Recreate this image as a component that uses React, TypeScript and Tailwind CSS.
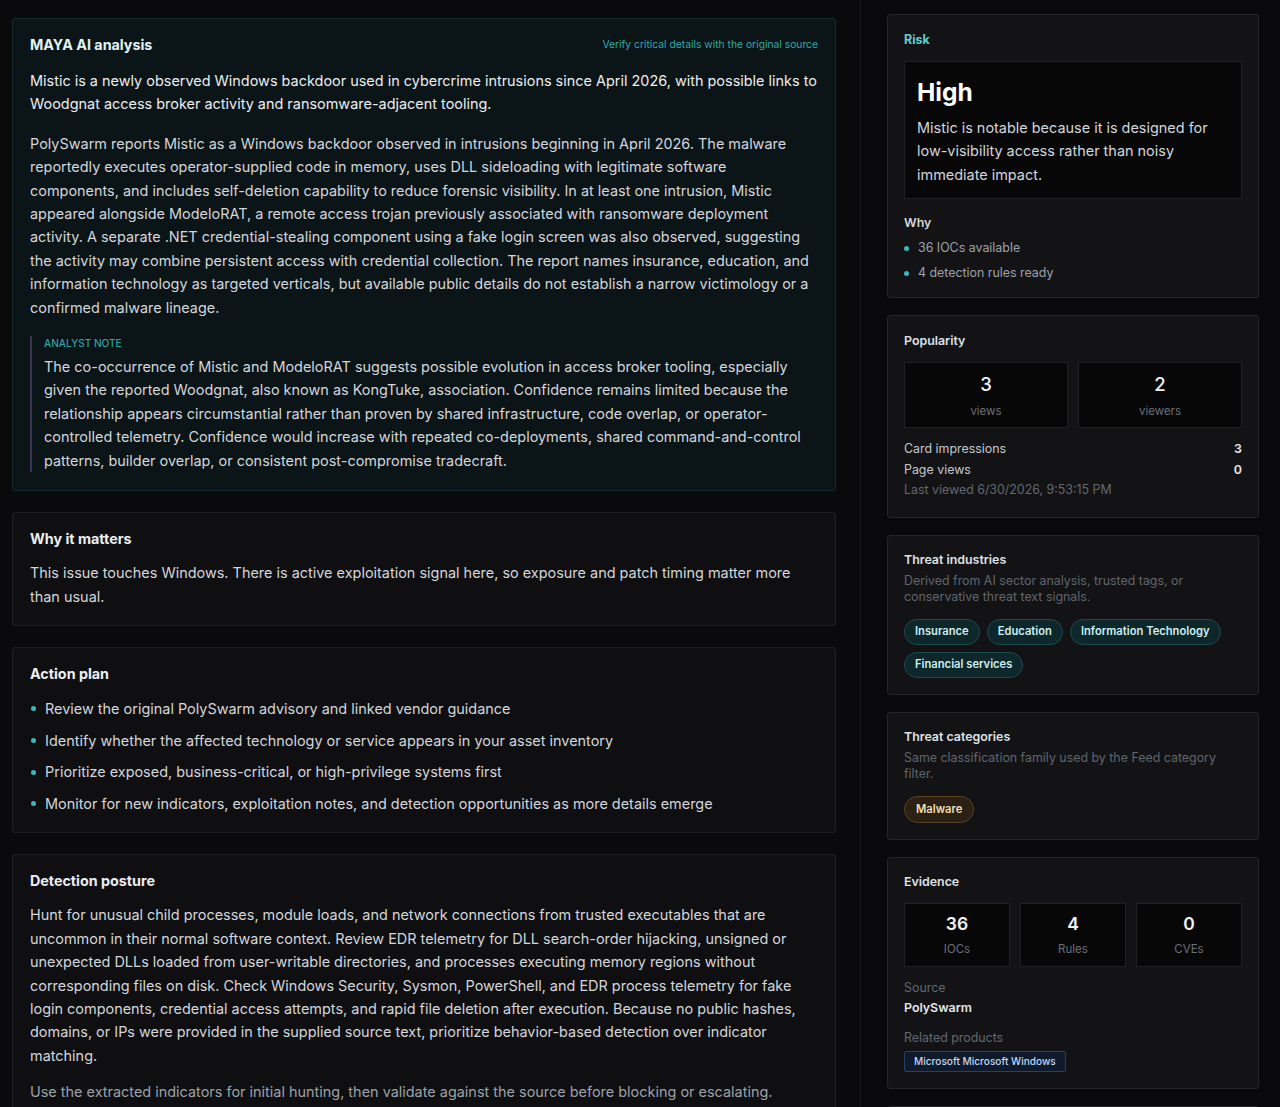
import React from "react";

function Dot({ className = "" }: { className?: string }) {
  return <span className={"inline-block w-[5px] h-[5px] rounded-full bg-[#3bb8bb] shrink-0 " + className} />;
}

function LeftCard({ title, children, gap = "mt-3" }: { title: string; children: React.ReactNode; gap?: string }) {
  return (
    <section className="border border-[#1f1f23] bg-[#0f0f11] rounded-[3px] px-[17px] pt-4 pb-[17px]">
      <h2 className="text-[14.3px] leading-5 font-bold text-[#eceef1]">{title}</h2>
      <div className={gap}>{children}</div>
    </section>
  );
}

function RightCard({ children, className = "p-4" }: { children: React.ReactNode; className?: string }) {
  return <section className={"border border-[#25252a] bg-[#131316] rounded-[3px] " + className}>{children}</section>;
}

function CardTitle({ children }: { children: React.ReactNode }) {
  return <h3 className="text-[12.4px] leading-4 font-semibold text-[#dfe1e5]">{children}</h3>;
}

function IndustryChip({ children }: { children: React.ReactNode }) {
  return (
    <span className="inline-flex items-center h-[26px] px-[10px] rounded-full border border-[#1d4a4f] bg-[#0e272b] text-[11.2px] font-semibold text-[#cdeff0]">
      {children}
    </span>
  );
}

export default function App() {
  const actions = [
    "Review the original PolySwarm advisory and linked vendor guidance",
    "Identify whether the affected technology or service appears in your asset inventory",
    "Prioritize exposed, business-critical, or high-privilege systems first",
    "Monitor for new indicators, exploitation notes, and detection opportunities as more details emerge",
  ];
  return (
    <div className="h-[1107px] w-[1280px] overflow-hidden flex bg-[#0a0a0c] font-[Inter,sans-serif] text-[#d1d5db]">
      {/* Left column */}
      <main className="w-[860px] shrink-0 pl-3 pr-6 pt-[18px] flex flex-col gap-[21px]">
        <section className="border border-[#142a2d] bg-[#0b1417] rounded-[3px] px-[17px] pt-[16px] pb-[18px]">
          <div className="flex items-center justify-between">
            <h2 className="text-[14.3px] leading-5 font-bold text-[#e2f4f4]">MAYA AI analysis</h2>
            <span className="text-[10.3px] text-[#2fa9a6]">Verify critical details with the original source</span>
          </div>
          <p className="mt-[14px] text-[14.45px] leading-[23.4px] text-[#eceef0]">
            Mistic is a newly observed Windows backdoor used in cybercrime intrusions since April 2026, with possible links to Woodgnat access broker activity and ransomware-adjacent tooling.
          </p>
          <p className="mt-4 text-[14.45px] leading-[23.4px] text-[#d3d6db]">
            PolySwarm reports Mistic as a Windows backdoor observed in intrusions beginning in April 2026. The malware reportedly executes operator-supplied code in memory, uses DLL sideloading with legitimate software components, and includes self-deletion capability to reduce forensic visibility. In at least one intrusion, Mistic appeared alongside ModeloRAT, a remote access trojan previously associated with ransomware deployment activity. A separate .NET credential-stealing component using a fake login screen was also observed, suggesting the activity may combine persistent access with credential collection. The report names insurance, education, and information technology as targeted verticals, but available public details do not establish a narrow victimology or a confirmed malware lineage.
          </p>
          <div className="mt-[17px] border-l-2 border-[#3a3454] pl-[12px]">
            <div className="text-[10.1px] leading-[14px] font-medium uppercase text-[#2fa3a0]">Analyst note</div>
            <p className="mt-[5px] text-[14.45px] leading-[23.4px] text-[#d3d6db]">
              The co-occurrence of Mistic and ModeloRAT suggests possible evolution in access broker tooling, especially given the reported Woodgnat, also known as KongTuke, association. Confidence remains limited because the relationship appears circumstantial rather than proven by shared infrastructure, code overlap, or operator-controlled telemetry. Confidence would increase with repeated co-deployments, shared command-and-control patterns, builder overlap, or consistent post-compromise tradecraft.
            </p>
          </div>
        </section>

        <LeftCard title="Why it matters">
          <p className="text-[14.45px] leading-[23.4px] text-[#d3d6db]">
            This issue touches Windows. There is active exploitation signal here, so exposure and patch timing matter more than usual.
          </p>
        </LeftCard>

        <LeftCard title="Action plan" gap="mt-[13px]">
          <ul className="flex flex-col gap-[8.3px]">
            {actions.map((a) => (
              <li key={a} className="flex items-center gap-[9px] pl-[1px] text-[14.45px] leading-[23.4px] text-[#d3d6db]">
                <Dot />
                <span>{a}</span>
              </li>
            ))}
          </ul>
        </LeftCard>

        <LeftCard title="Detection posture">
          <p className="text-[14.45px] leading-[23.4px] text-[#d3d6db]">
            Hunt for unusual child processes, module loads, and network connections from trusted executables that are uncommon in their normal software context. Review EDR telemetry for DLL search-order hijacking, unsigned or unexpected DLLs loaded from user-writable directories, and processes executing memory regions without corresponding files on disk. Check Windows Security, Sysmon, PowerShell, and EDR process telemetry for fake login components, credential access attempts, and rapid file deletion after execution. Because no public hashes, domains, or IPs were provided in the supplied source text, prioritize behavior-based detection over indicator matching.
          </p>
          <p className="mt-[13px] text-[14.45px] leading-[23.4px] text-[#9ca1a8]">
            Use the extracted indicators for initial hunting, then validate against the source before blocking or escalating.
          </p>
          <div className="h-10" />
        </LeftCard>
      </main>

      {/* Right column */}
      <aside className="flex-1 border-l border-[#18181b] bg-[#09090b] pl-[26px] pr-[21px] pt-[14px] flex flex-col gap-[17px]">
        <RightCard className="px-4 pt-[17px] pb-[14px]">
          <div className="text-[12.5px] leading-4 font-bold text-[#62cdd0]">Risk</div>
          <div className="mt-[13px] border border-[#202024] bg-[#070708] px-3 pt-3 pb-3">
            <div className="text-[24.5px] leading-[36px] font-bold text-white">High</div>
            <p className="mt-[6px] text-[14.45px] leading-[23.4px] text-[#d3d6db]">
              Mistic is notable because it is designed for low-visibility access rather than noisy immediate impact.
            </p>
          </div>
          <div className="mt-[15px] text-[12.4px] leading-[18px] font-semibold text-[#d5d8dc]">Why</div>
          <ul className="mt-[6px] flex flex-col gap-[5px]">
            {["36 IOCs available", "4 detection rules ready"].map((t) => (
              <li key={t} className="flex items-center gap-[9px] text-[12.4px] leading-5 text-[#9da2a9]">
                <Dot />
                <span>{t}</span>
              </li>
            ))}
          </ul>
        </RightCard>

        <RightCard className="px-4 pt-[17px] pb-4">
          <CardTitle>Popularity</CardTitle>
          <div className="mt-[13px] grid grid-cols-2 gap-[10px]">
            {[
              ["3", "views"],
              ["2", "viewers"],
            ].map(([n, l]) => (
              <div key={l} className="border border-[#202024] bg-[#070708] pt-[9px] pb-[8px] flex flex-col items-center">
                <div className="text-[18.5px] leading-6 font-medium text-[#f1f2f4]">{n}</div>
                <div className="mt-[7px] text-[11.5px] leading-4 text-[#6b7078]">{l}</div>
              </div>
            ))}
          </div>
          <div className="mt-[11px] text-[12.4px] leading-[20.5px]">
            <div className="flex justify-between text-[#c4c8ce]">
              <span>Card impressions</span>
              <span className="font-semibold text-[#e7e9ec]">3</span>
            </div>
            <div className="flex justify-between text-[#c4c8ce]">
              <span>Page views</span>
              <span className="font-semibold text-[#e7e9ec]">0</span>
            </div>
            <div className="text-[#62676f]">Last viewed 6/30/2026, 9:53:15 PM</div>
          </div>
        </RightCard>

        <RightCard>
          <CardTitle>Threat industries</CardTitle>
          <p className="mt-[5px] text-[12.4px] leading-4 text-[#60656d]">
            Derived from AI sector analysis, trusted tags, or conservative threat text signals.
          </p>
          <div className="mt-[14px] flex flex-wrap gap-x-[7px] gap-y-[7px]">
            <IndustryChip>Insurance</IndustryChip>
            <IndustryChip>Education</IndustryChip>
            <IndustryChip>Information Technology</IndustryChip>
            <IndustryChip>Financial services</IndustryChip>
          </div>
        </RightCard>

        <RightCard>
          <CardTitle>Threat categories</CardTitle>
          <p className="mt-[5px] text-[12.4px] leading-[16.5px] text-[#60656d]">
            Same classification family used by the Feed category filter.
          </p>
          <div className="mt-[13px] flex">
            <span className="inline-flex items-center h-[27px] px-[11px] rounded-full border border-[#5a4322] bg-[#2a2114] text-[11.2px] font-semibold text-[#f3dfb0]">
              Malware
            </span>
          </div>
        </RightCard>

        <RightCard className="px-4 pt-4 pb-4">
          <CardTitle>Evidence</CardTitle>
          <div className="mt-[13px] grid grid-cols-3 gap-[10px]">
            {[
              ["36", "IOCs"],
              ["4", "Rules"],
              ["0", "CVEs"],
            ].map(([n, l]) => (
              <div key={l} className="border border-[#202024] bg-[#070708] py-[9px] flex flex-col items-center">
                <div className="text-[17.5px] leading-[22px] font-semibold text-[#f1f2f4]">{n}</div>
                <div className="mt-[6px] text-[11.5px] leading-4 text-[#6b7078]">{l}</div>
              </div>
            ))}
          </div>
          <div className="mt-[13px] text-[12.4px] leading-4 text-[#62676f]">Source</div>
          <div className="mt-[4px] text-[12.4px] leading-4 font-semibold text-[#e3e5e8]">PolySwarm</div>
          <div className="mt-[14px] text-[12.4px] leading-4 text-[#62676f]">Related products</div>
          <div className="mt-[5px] flex">
            <span className="inline-flex items-center h-[21px] px-[9px] rounded-[2px] border border-[#22406a] bg-[#0f1b2c] text-[10.1px] font-medium text-[#c3d6f1]">
              Microsoft Microsoft Windows
            </span>
          </div>
        </RightCard>

        <RightCard>
          <div className="h-24" />
        </RightCard>
      </aside>
    </div>
  );
}
